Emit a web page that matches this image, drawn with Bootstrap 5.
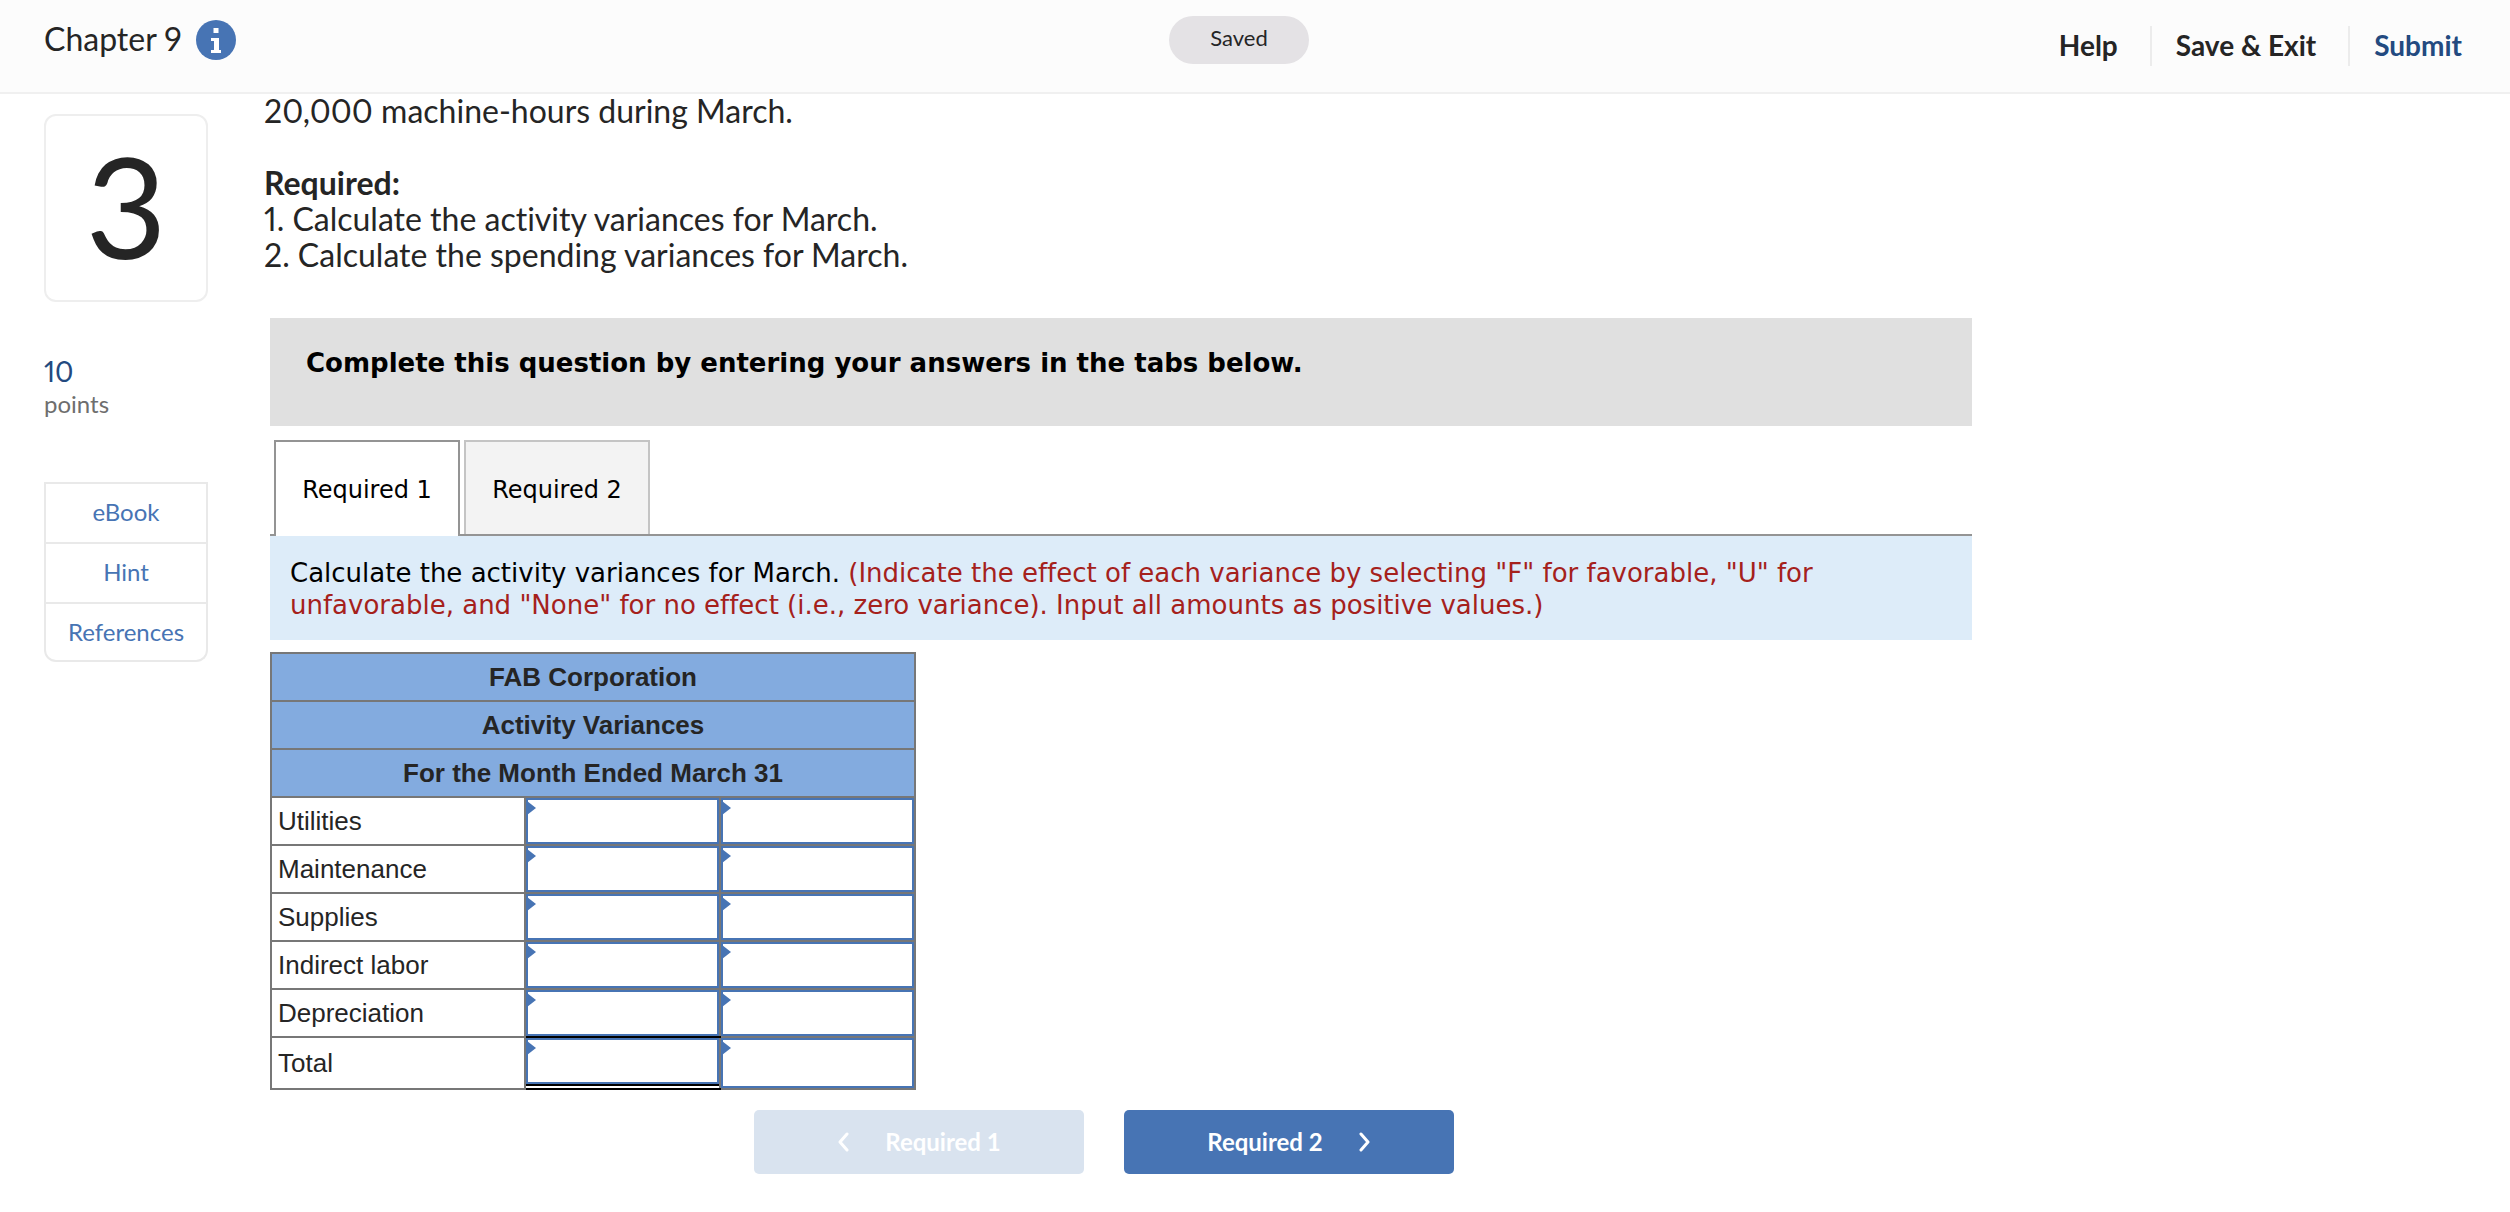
<!DOCTYPE html>
<html lang="en">
<head>
<meta charset="utf-8">
<meta name="viewport" content="width=device-width, initial-scale=1">
<title>Chapter 9</title>
<link href="https://cdn.jsdelivr.net/npm/bootstrap@5.3.0/dist/css/bootstrap.min.css" rel="stylesheet">
<style>
  body { font-family: Lato, "Open Sans", sans-serif; font-variant-ligatures: none; font-variant-numeric: proportional-nums; color: #252525; font-size: 32px; line-height: 36px; background: #fff; }
  a { text-decoration: none; }

  .top-bar { height: 94px; background: #fcfcfc; border-bottom: 2px solid #f0f0f0; padding: 0 44px; }
  .side-cell { flex: 1 1 0; }
  .chapter-name { padding-top: 20px; gap: 14px; line-height: 38px; margin-right: -32px; }
  .saved-pill { margin-top: 16px; width: 140px; height: 48px; border-radius: 24px; background: #e4e2e5; font-size: 22px; line-height: 44px; text-align: center; }
  .top-links { padding-top: 26px; font-size: 28px; line-height: 38px; font-weight: 700; }
  .top-links a { height: 40px; color: #252525; padding: 0 32px 0 24px; border-right: 2px solid #ececec; }
  .top-links a:last-child { color: #234a80; padding-right: 4px; border-right: 0; }

  .page-area { padding: 93px 44px 38px; gap: 56px; }
  .side-rail { width: 164px; flex: none; padding-top: 21px; font-size: 24px; }
  .question-number { height: 188px; border: 2px solid #eee; border-radius: 12px; font-size: 140px; line-height: 178px; text-align: center; }
  .points-value { margin-top: 51px; font-size: 28px; line-height: 36px; color: #234a80; }
  .points-label { color: #6e6e6e; line-height: 30px; }
  .help-list { margin-top: 63px; --bs-list-group-border-color: #e9e9e9; --bs-list-group-border-width: 2px; --bs-list-group-border-radius: 0; border-radius: 0 0 12px 12px; }
  .help-list .list-group-item { padding: 9px 0 11px; line-height: 38px; color: #4774b4; text-align: center; }
  .help-list .list-group-item:last-child { padding-bottom: 9px; border-radius: 0 0 12px 12px; }

  .content-col { flex: 0 1 1708px; min-width: 0; }
  .work-panel { margin: 45px 0 0 6px; }
  .verdana { font-family: Verdana, "DejaVu Sans", sans-serif; font-size: 26px; line-height: 32px; color: #000; }
  .notice { background: #e0e0e0; padding: 29px 36px 47px; font-weight: 700; }
  .part-tabs { margin-top: 14px; padding-left: 4px; gap: 4px; border-bottom: 2px solid #949494; --bs-nav-tabs-border-width: 2px; }
  .part-tabs .nav-link { width: 186px; height: 94px; margin-bottom: 0; padding: 4px 0 0; font-size: 24px; color: #000; background: #f3f3f3; border: 2px solid #c4c4c4; border-bottom: 0; border-radius: 0; }
  .part-tabs .nav-link.active { height: 96px; margin-bottom: -2px; padding-top: 2px; background: #fff; border-color: #949494; color: #000; }
  .instructions { background: #ddecf9; padding: 21px 20px 19px; }
  .instructions em { font-style: normal; color: #a5211c; }

  .sheet { margin-top: 12px; width: 646px; table-layout: fixed; border-collapse: collapse; font: 26px/30px "Liberation Sans", Arial, sans-serif; }
  .sheet th, .sheet td { border: 2px solid #777; padding: 0; height: 48px; }
  .sheet thead th { background: #83abdf; text-align: center; font-weight: 700; }
  .sheet tbody th { font-weight: 400; padding-left: 6px; }
  .sheet tbody td { position: relative; vertical-align: top; }
  .sheet td::after { content: ""; position: absolute; left: 1px; top: 3px; border: solid transparent; border-width: 7px 0 7px 9px; border-left-color: #4774b4; }
  .entry { display: block; width: 100%; height: 46px; border: 2px solid #4774b4; border-radius: 0; padding: 0 14px; background: #fff; outline: 0; }
  .tall-entry { height: 50px; }
  .sheet .last-addend, .sheet .sum-cell { border-bottom-color: #000; }
  .sum-rule { height: 4px; border-top: 2px solid #000; }

  .step-nav { margin-top: 20px; gap: 40px; padding-right: 34px; }
  .step-btn { width: 330px; height: 64px; gap: 36px; border: 0; border-radius: 5px; font-size: 24px; font-weight: 700; --bs-btn-bg: #4774b4; --bs-btn-color: #fff; --bs-btn-hover-bg: #3c65a0; --bs-btn-hover-color: #fff; --bs-btn-disabled-bg: #d9e3ef; --bs-btn-disabled-color: #fff; --bs-btn-disabled-opacity: 1; }
</style>
<script src="https://cdn.jsdelivr.net/npm/bootstrap@5.3.0/dist/js/bootstrap.bundle.min.js" defer></script>
</head>
<body>
<header class="top-bar fixed-top d-flex align-items-start">
  <div class="side-cell chapter-name d-flex">
    <span>Chapter 9</span>
    <a href="#" aria-label="Assignment information" class="d-flex">
      <svg width="40" height="40" viewBox="0 0 40 40"><circle cx="20" cy="20" r="20" fill="#4774b4"/><path fill="#fff" d="M17.500 8h5v5h-5zM15 18h8v12h2v3H15v-3h3v-9h-3z"/></svg>
    </a>
  </div>
  <div class="saved-pill" role="status">Saved</div>
  <nav class="side-cell top-links d-flex justify-content-end">
    <a href="#">Help</a>
    <a href="#">Save &amp; Exit</a>
    <a href="#">Submit</a>
  </nav>
</header>

<div class="page-area d-flex align-items-start">
  <aside class="side-rail">
    <div class="question-number">3</div>
    <div class="points-value">10</div>
    <div class="points-label">points</div>
    <div class="list-group help-list">
      <a href="#" class="list-group-item">eBook</a>
      <a href="#" class="list-group-item">Hint</a>
      <a href="#" class="list-group-item">References</a>
    </div>
  </aside>

  <main class="content-col">
    <div>20,000 machine-hours during March.<br><br><b>Required:</b><br>1. Calculate the activity variances for March.<br>2. Calculate the spending variances for March.</div>

    <section class="work-panel">
      <div class="notice verdana">Complete this question by entering your answers in the tabs below.</div>
      <div class="nav nav-tabs part-tabs verdana align-items-start" role="tablist">
        <button class="nav-link active" type="button" role="tab" aria-selected="true">Required 1</button>
        <button class="nav-link" type="button" role="tab" aria-selected="false">Required 2</button>
      </div>
      <div class="instructions verdana">Calculate the activity variances for March. <em>(Indicate the effect of each variance by selecting "F" for favorable, "U" for unfavorable, and "None" for no effect (i.e., zero variance). Input all amounts as positive values.)</em></div>

      <table class="sheet">
        <colgroup><col style="width:254px"><col style="width:195px"><col style="width:195px"></colgroup>
        <thead>
          <tr><th colspan="3">FAB Corporation</th></tr>
          <tr><th colspan="3">Activity Variances</th></tr>
          <tr><th colspan="3">For the Month Ended March 31</th></tr>
        </thead>
        <tbody>
          <tr><th scope="row">Utilities</th><td><input class="entry" type="text" aria-label="Utilities amount"></td><td><input class="entry" type="text" aria-label="Utilities effect"></td></tr>
          <tr><th scope="row">Maintenance</th><td><input class="entry" type="text" aria-label="Maintenance amount"></td><td><input class="entry" type="text" aria-label="Maintenance effect"></td></tr>
          <tr><th scope="row">Supplies</th><td><input class="entry" type="text" aria-label="Supplies amount"></td><td><input class="entry" type="text" aria-label="Supplies effect"></td></tr>
          <tr><th scope="row">Indirect labor</th><td><input class="entry" type="text" aria-label="Indirect labor amount"></td><td><input class="entry" type="text" aria-label="Indirect labor effect"></td></tr>
          <tr><th scope="row">Depreciation</th><td class="last-addend"><input class="entry" type="text" aria-label="Depreciation amount"></td><td><input class="entry" type="text" aria-label="Depreciation effect"></td></tr>
          <tr><th scope="row">Total</th><td class="sum-cell"><input class="entry" type="text" aria-label="Total amount"><div class="sum-rule"></div></td><td><input class="entry tall-entry" type="text" aria-label="Total effect"></td></tr>
        </tbody>
      </table>

      <div class="step-nav d-flex justify-content-center">
        <button type="button" class="btn step-btn d-flex align-items-center justify-content-center" disabled>
          <svg width="12" height="20" viewBox="0 0 12 20" fill="none" stroke="#fff" stroke-width="3" stroke-linecap="round" stroke-linejoin="round"><path d="M10 2 3 10l7 8"/></svg>
          Required 1
        </button>
        <button type="button" class="btn step-btn d-flex align-items-center justify-content-center">
          Required 2
          <svg width="12" height="20" viewBox="0 0 12 20" fill="none" stroke="#fff" stroke-width="3" stroke-linecap="round" stroke-linejoin="round"><path d="m2 2 7 8-7 8"/></svg>
        </button>
      </div>
    </section>
  </main>
</div>
</body>
</html>
